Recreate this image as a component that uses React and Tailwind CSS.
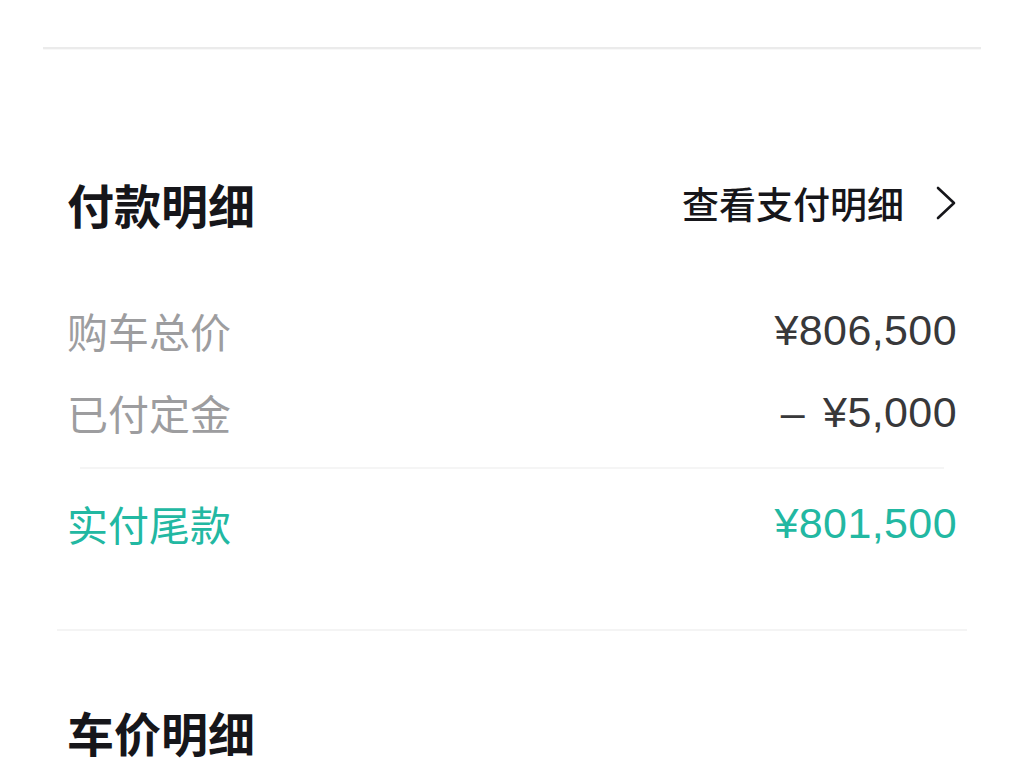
const CJK = "font-['Noto_Sans_CJK_SC',sans-serif]";
const NUM = "font-['Liberation_Sans','Noto_Sans_CJK_SC',sans-serif]";

const ROWS = [
  { label: "购车总价", value: "¥806,500" },
  { label: "已付定金", value: "¥5,000", minus: true },
];

function Chevron() {
  return (
    <svg width="22" height="34" viewBox="0 0 22 34" fill="none" className="shrink-0">
      <polyline
        points="3,2 19,17 3,32"
        stroke="#16161a"
        strokeWidth="2.6"
        strokeLinecap="round"
        strokeLinejoin="round"
      />
    </svg>
  );
}

export default function App() {
  return (
    <div className={`w-full min-h-screen bg-white ${CJK} overflow-hidden`}>
      {/* top divider */}
      <div className="pt-[47px] px-[43px]">
        <div className="h-[2px] bg-[#ebebeb] shadow-[0_1px_1px_rgba(0,0,0,0.03)]" />
      </div>

      {/* 付款明细 */}
      <div className="px-[67px]">
        <div className="mt-[126px] h-[56px] flex items-center justify-between">
          <h2 className="text-[47px] leading-none font-bold text-[#16161a]">付款明细</h2>
          <div className="flex items-center gap-[31px]">
            <span className="text-[37px] leading-none font-medium text-[#16161a]">查看支付明细</span>
            <Chevron />
          </div>
        </div>

        <div className="mt-[71px] flex flex-col gap-[26px]">
          {ROWS.map((r) => (
            <div key={r.label} className="h-[56px] flex items-center justify-between">
              <span className="text-[41px] leading-none text-[#9d9d9f]">{r.label}</span>
              <span className={`${NUM} text-[43px] leading-none tracking-[0.4px] text-[#38383a]`}>
                {r.minus && <span className="mr-[18px]">–</span>}
                {r.value}
              </span>
            </div>
          ))}
        </div>
      </div>

      <div className="mt-[27px] mx-[80px] h-[2px] bg-[#f5f5f5]" />

      <div className="px-[67px]">
        <div className="mt-[26px] h-[56px] flex items-center justify-between">
          <span className="text-[41px] leading-none text-[#22b8a2]">实付尾款</span>
          <span className={`${NUM} text-[43px] leading-none tracking-[0.4px] text-[#22b8a2]`}>¥801,500</span>
        </div>
      </div>

      <div className="mt-[78px] mx-[57px] h-[2px] bg-[#f4f4f4]" />

      {/* 车价明细 */}
      <div className="px-[67px]">
        <div className="mt-[72px] h-[56px] flex items-center">
          <h2 className="text-[47px] leading-none font-bold text-[#16161a]">车价明细</h2>
        </div>
      </div>
    </div>
  );
}
